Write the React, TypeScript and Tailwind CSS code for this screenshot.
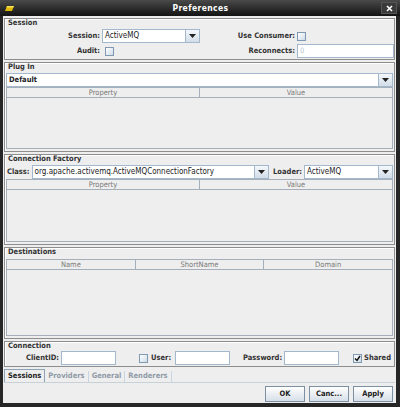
import React from "react";

// Metal-ish Java preferences dialog

const font = "font-['DejaVu_Sans_Condensed','DejaVu_Sans',sans-serif]";

function Arrow() {
  return (
    <div className="w-[14px] h-full border-l border-[#a3b8cc] bg-gradient-to-b from-[#f4f8fb] to-[#d2dde8] flex items-center justify-center">
      <svg width="7" height="4" viewBox="0 0 7 4">
        <path d="M0 0H7L3.5 4Z" fill="#222" />
      </svg>
    </div>
  );
}

function Combo({ value, className = "", bold = false }: { value: string; className?: string; bold?: boolean }) {
  return (
    <div className={`h-[14px] bg-white border border-[#a3b8cc] flex items-stretch ${className}`}>
      <div
        className={`flex-1 pl-[2px] leading-[12px] text-[#222] truncate ${bold ? "font-bold text-[7.5px]" : "font-normal text-[8px]"}`}
      >
        {value}
      </div>
      <Arrow />
    </div>
  );
}

function Check({ checked = false }: { checked?: boolean }) {
  return (
    <div className="w-[9px] h-[9px] border border-[#7f99b2] bg-gradient-to-br from-[#ffffff] to-[#cfdbe6] flex items-center justify-center">
      {checked && (
        <svg width="7" height="7" viewBox="0 0 7 7">
          <path d="M1 3.5L3 5.5L6 1" stroke="#111" strokeWidth="1.4" fill="none" />
        </svg>
      )}
    </div>
  );
}

function Field({ className = "", value = "" }: { className?: string; value?: string }) {
  return (
    <div className={`h-[14px] bg-white border border-[#a3b8cc] pl-[2px] leading-[12px] text-[#b8c4d0] font-normal ${className}`}>
      {value}
    </div>
  );
}

function Table({ cols }: { cols: string[] }) {
  return (
    <div className="flex-1 flex flex-col border border-[#a5afb9] mx-[1px]">
      <div className="flex h-[10px] border-b border-[#a5afb9]">
        {cols.map((c, i) => (
          <div
            key={c}
            className={`flex-1 text-center leading-[9px] text-[#7a7a7a] font-normal text-[7.5px] ${i > 0 ? "border-l border-[#a5afb9]" : ""}`}
          >
            {c}
          </div>
        ))}
      </div>
      <div className="flex-1 bg-[#eeeeee]" />
    </div>
  );
}

function Section({ title, className = "", children }: { title: string; className?: string; children: React.ReactNode }) {
  return (
    <div className={`flex flex-col border border-[#8d8d8d] shadow-[inset_1px_1px_0_#ffffff] ${className}`}>
      <div className="h-[9px] pl-[3px] leading-[8px] text-[#333]">{title}</div>
      {children}
    </div>
  );
}

export default function App() {
  return (
    <div className={`w-[400px] h-[407px] bg-[#262626] flex flex-col text-[7.5px] font-bold ${font}`}>
      {/* title bar */}
      <div className="h-[16px] flex items-center bg-gradient-to-b from-[#4a4a4a] to-[#141414]">
        <div className="w-[18px] pl-[4px] flex items-center">
          <svg width="11" height="7" viewBox="0 0 11 7">
            <path d="M1 6L3 1H10L8 6Z" fill="#e0b800" />
            <path d="M3 1H10L9.3 2.6H2.4Z" fill="#f7e25a" />
          </svg>
        </div>
        <div className="flex-1 text-center text-white text-[8.5px] font-bold tracking-[0.4px] pl-[2px]">
          Preferences
        </div>
        <div className="w-[16px] h-[12px] mr-[3px] bg-[#3a3a3a] border border-[#555] flex items-center justify-center">
          <svg width="7" height="7" viewBox="0 0 7 7">
            <path d="M1 1L6 6M6 1L1 6" stroke="#fff" strokeWidth="1.6" />
          </svg>
        </div>
      </div>

      <div className="flex-1 ml-[3px] mr-[4px] mb-[4px] bg-[#eeeeee] flex flex-col px-[1px] pt-[2px] gap-[2px] text-[#333]">
        {/* Session */}
        <Section title="Session" className="h-[42px]">
          <div className="grid grid-cols-[95px_98px_1fr_97px] gap-x-[2px] gap-y-[1px] pt-[1px] items-center">
            <div className="text-right">Session:</div>
            <Combo value="ActiveMQ" />
            <div className="text-right">Use Consumer:</div>
            <div className="flex items-center"><Check /></div>
            <div className="text-right">Audit:</div>
            <div className="flex items-center pl-[3px]"><Check /></div>
            <div className="text-right">Reconnects:</div>
            <Field value="0" />
          </div>
        </Section>

        {/* Plug In */}
        <Section title="Plug In" className="h-[90px]">
          <div className="pb-[2px] flex-1 flex flex-col pt-[1px]">
            <Combo value="Default" className="mx-[1px]" bold />
            <Table cols={["Property", "Value"]} />
          </div>
        </Section>

        {/* Connection Factory */}
        <Section title="Connection Factory" className="h-[91px]">
          <div className="flex-1 flex flex-col pb-[2px] pt-[1px]">
            <div className="flex items-center gap-[2px] pl-[2px] pr-[1px]">
              <span>Class:</span>
              <Combo value="org.apache.activemq.ActiveMQConnectionFactory" className="flex-1" />
              <span className="ml-[2px]">Loader:</span>
              <Combo value="ActiveMQ" className="w-[89px]" />
            </div>
            <Table cols={["Property", "Value"]} />
          </div>
        </Section>

        {/* Destinations */}
        <Section title="Destinations" className="h-[92px]">
          <div className="flex-1 flex flex-col pb-[2px] pt-[2px]">
            <Table cols={["Name", "ShortName", "Domain"]} />
          </div>
        </Section>

        {/* Connection */}
        <Section title="Connection" className="h-[26px]">
          <div className="flex items-center pl-[2px] pr-[2px]">
            <span className="w-[52px] text-right">ClientID:</span>
            <Field className="w-[55px] ml-[2px]" />
            <div className="ml-[23px]"><Check /></div>
            <span className="ml-[3px]">User:</span>
            <Field className="w-[55px] ml-[4px]" />
            <span className="w-[52px] text-right">Password:</span>
            <Field className="w-[55px] ml-[2px]" />
            <div className="flex-1" />
            <Check checked />
            <span className="ml-[2px] mr-[1px]">Shared</span>
          </div>
        </Section>

        {/* tabs */}
        <div className="flex items-end h-[14px] border-b border-[#c8d0d8]">
          <div className="px-[3px] h-[13px] leading-[12px] bg-[#eeeeee] border border-[#8fa3b7] border-b-0 text-[#222]">
            Sessions
          </div>
          {["Providers", "General", "Renderers"].map((t) => (
            <div key={t} className="px-[3px] h-[11px] leading-[10px] text-[#8f9aa6] border-r border-[#c8d6e4]">
              {t}
            </div>
          ))}
        </div>

        {/* buttons */}
        <div className="flex-1 flex items-center justify-end gap-[4px] pr-[2px]">
          {["OK", "Canc...", "Apply"].map((b) => (
            <div
              key={b}
              className="w-[40px] h-[16px] flex items-center justify-center border border-[#7c8fa3] bg-gradient-to-b from-[#ffffff] to-[#d6dfe8] text-[#222]"
            >
              {b}
            </div>
          ))}
        </div>
      </div>
    </div>
  );
}
